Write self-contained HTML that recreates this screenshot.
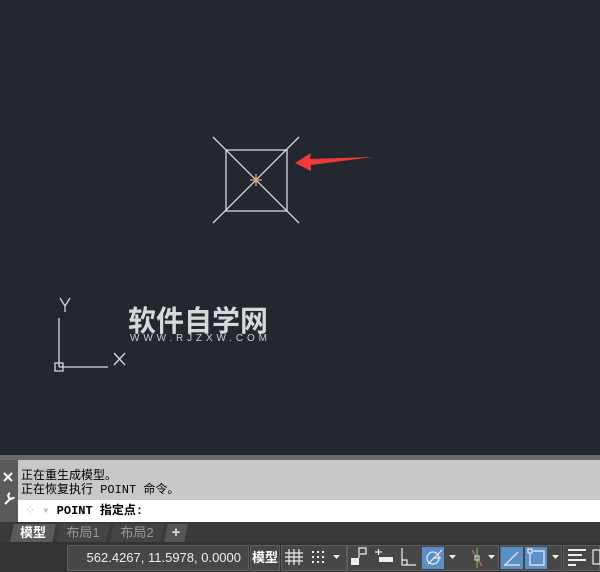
<!DOCTYPE html><html><head><meta charset="utf-8"><style>
body{margin:0;width:600px;height:572px;overflow:hidden;background:#232830;font-family:"Liberation Sans","Noto Sans CJK SC",sans-serif;position:relative}
.a{position:absolute}
.mono{font-family:"Liberation Mono","Noto Sans CJK SC",monospace}
.sb{position:absolute;top:545px;height:26px;background:#474747;border:1px solid #5e5e5e;box-sizing:border-box}
.bl{background:#5b8fc7}
.tab{position:absolute;top:524px;height:18px;transform:skewX(-12deg)}
.tt{position:absolute;top:524px;height:18px;font-size:13px;line-height:18px;text-align:center}
</style></head><body>
<svg class="a" style="left:0;top:0" width="600" height="455">
<g stroke="#d8d8d8" stroke-width="1.3" fill="none">
<rect x="226" y="150" width="61" height="61"/>
<line x1="213" y1="137" x2="299" y2="223"/><line x1="299" y1="137" x2="213" y2="223"/>
<line x1="59" y1="318" x2="59" y2="367"/><line x1="59" y1="367" x2="108" y2="367"/>
<rect x="55" y="363" width="8" height="8"/>
<path d="M60 298 L65 306 L70 298 M65 306 V312"/>
<path d="M114 353 L125 365 M125 353 L114 365"/>
</g>
<path d="M256 174V186M250 180H262" stroke="#f0a060" stroke-width="1.3"/>
<path d="M295 163 L311 153 L310 159 L373 157 L311 165 L311 171 Z" fill="#f03a3a"/>
<text x="128" y="331" font-size="29" font-weight="bold" fill="#d8d8d8" font-family="Noto Sans CJK SC,sans-serif" textLength="140" lengthAdjust="spacingAndGlyphs">软件自学网</text>
<text x="130" y="341" font-size="10" fill="#cfcfcf" textLength="137" lengthAdjust="spacing">WWW.RJZXW.COM</text>
</svg>
<div class="a" style="left:0;top:455px;width:600px;height:5px;background:#6a6a6a"></div>
<div class="a" style="left:0;top:460px;width:18px;height:62px;background:#5a5a5a"></div>
<svg class="a" style="left:0;top:455px" width="18" height="60" fill="none" stroke="#fff" stroke-width="2">
<path d="M4 18L12 26M12 18L4 26"/>
<path d="M5 49L11 43M10 38a3 3 0 1 0 4 4" />
</svg>
<div class="a mono" style="left:18px;top:460px;width:582px;height:40px;background:#c8c8c8;font-size:12px;line-height:14px;color:#000;padding:9px 0 0 3px;box-sizing:border-box">正在重生成模型。<br>正在恢复执行 POINT 命令。</div>
<div class="a mono" style="left:18px;top:500px;width:582px;height:22px;background:#fff;font-size:12px;line-height:22px;color:#000;font-weight:bold;padding-left:7px;box-sizing:border-box"><span style="color:#bbb;font-weight:normal">⁘ ▾</span> POINT 指定点:</div>
<div class="a" style="left:0;top:522px;width:600px;height:50px;background:#333"></div>
<div class="a" style="left:0;top:522px;width:600px;height:20px;background:#3a3a3a"></div>
<div class="tab" style="left:12px;width:42px;background:#5a5a5a"></div>
<div class="tt" style="left:12px;width:42px;color:#fff;font-weight:bold">模型</div>
<div class="tab" style="left:58px;width:50px;background:#444"></div>
<div class="tt" style="left:58px;width:50px;color:#999">布局1</div>
<div class="tab" style="left:112px;width:50px;background:#444"></div>
<div class="tt" style="left:112px;width:50px;color:#999">布局2</div>
<div class="tab" style="left:166px;width:20px;background:#555"></div>
<div class="tt" style="left:166px;width:20px;color:#ddd;font-weight:bold;font-size:15px">+</div>
<div class="sb" style="left:67px;width:182px;color:#eee;font-size:13px;line-height:24px;text-align:right;padding-right:7px">562.4267, 11.5978, 0.0000</div>
<div class="sb" style="left:250px;width:30px;color:#fff;font-size:13px;line-height:24px;text-align:center;font-weight:bold">模型</div>
<div class="sb" style="left:281px;width:66px"></div>
<div class="sb" style="left:347px;width:152px"></div>
<div class="sb" style="left:500px;width:62px"></div>
<div class="sb" style="left:563px;width:37px"></div>
<div class="a bl" style="left:422px;top:547px;width:22px;height:22px"></div>
<div class="a bl" style="left:501px;top:547px;width:22px;height:22px"></div>
<div class="a bl" style="left:525px;top:547px;width:22px;height:22px"></div>
<svg class="a" style="left:0;top:540px" width="600" height="32" fill="none" stroke="#eee" stroke-width="1.2">
<path d="M289 9V25M294 9V25M299 9V25M285 13H303M285 17H303M285 21H303"/>
<g fill="#eee" stroke="none"><rect x="312" y="11" width="2" height="2"/><rect x="317" y="11" width="2" height="2"/><rect x="322" y="11" width="2" height="2"/><rect x="312" y="16" width="2" height="2"/><rect x="317" y="16" width="2" height="2"/><rect x="322" y="16" width="2" height="2"/><rect x="312" y="21" width="2" height="2"/><rect x="317" y="21" width="2" height="2"/><rect x="322" y="21" width="2" height="2"/>
<path d="M333 15h7l-3.5 4z M449 15h7l-3.5 4z M488 15h7l-3.5 4z M552 15h7l-3.5 4z"/>
<rect x="351" y="18" width="8" height="7"/><rect x="379" y="17" width="14" height="5"/>
<rect x="568" y="9" width="18" height="2"/><rect x="568" y="14" width="14" height="2"/><rect x="568" y="19" width="18" height="2"/><rect x="568" y="24" width="8" height="2"/></g>
<path d="M359 18V8H366V14H360"/><path d="M375 12H382M378.5 9V15"/>
<path d="M402 8V25H416M402 20H407V25"/>
<circle cx="433" cy="18" r="6"/><path d="M428 24L442 10M433 18H441"/>
<path d="M472 10L482 26" stroke="#e06060"/><path d="M477 8L477 28" stroke="#60c060"/><rect x="475" y="16" width="4" height="4" stroke="#ccc"/>
<path d="M504 25H520M505 25L518 12"/><rect x="528" y="9" width="4" height="4"/><path d="M533 11H544V25H530V14"/>
<rect x="593" y="10" width="7" height="14"/>
</svg>
</body></html>
